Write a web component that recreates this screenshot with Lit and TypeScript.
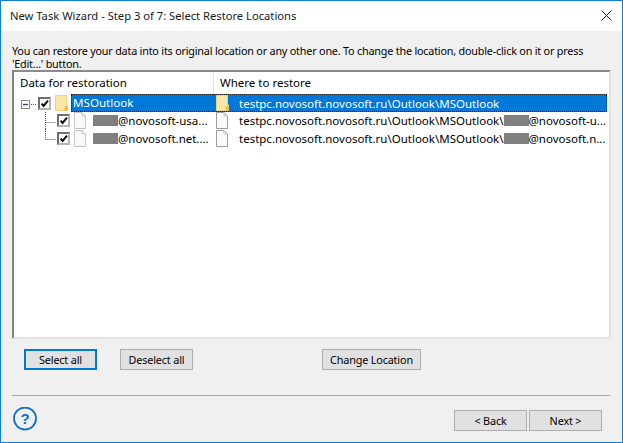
import { LitElement, html, css, svg } from "lit";
import { customElement } from "lit/decorators.js";

const check = svg`<path d="M1.6 4.6 L3.6 7 L8 1.6" fill="none" stroke="#0c0c0c" stroke-width="2"/>`;

@customElement("app-root")
export class AppRoot extends LitElement {
  static styles = css`
    :host { display: block; width: 623px; height: 443px; overflow: hidden; }
    * { box-sizing: border-box; }
    .win {
      width: 623px; height: 443px; display: flex; flex-direction: column;
      border: 1px solid #0f7fd8; background: #f0f0f0;
      font-family: "Noto Sans", "Open Sans", sans-serif; font-size: 11.5px; color: #000;
    }
    .title {
      height: 30px; background: #fff; display: flex; align-items: center;
      justify-content: space-between; padding: 0 10px 2px 9px; font-size: 11.2px; color: #1a1a1a; flex: none;
    }
    .close { display: block; }
    .intro { margin: 13px 0 0 11px; width: 600px; line-height: 13px; height: 26px; font-size: 10.8px; letter-spacing: -0.2px; flex: none; white-space: nowrap; }
    .panel {
      margin: 0 0 0 11px; width: 599px; height: 269px; flex: none; background: #fff;
      border: 2px solid #a0a0a0; border-right: 2px solid #e3e3e3; border-bottom: 2px solid #e3e3e3;
      border-left-color: #828282; border-top-color: #8a8a8a; display: flex; flex-direction: column;
    }
    .head { display: flex; height: 21px; flex: none; line-height: 21px; margin-bottom: 1px; }
    .h1 { width: 200px; padding-left: 6px; border-right: 1px solid #e5e5e5; }
    .h2 { padding-left: 6px; }
    .row { display: flex; align-items: center; height: 17.5px; white-space: nowrap; }
    .row.first { height: 18px; margin-right: 2px; }
    .left { width: 199px; display: flex; align-items: center; flex: none; height: 100%; padding-left: 5px; }
    .right { flex: 1; display: flex; align-items: center; height: 100%; min-width: 0; padding-left: 2px; margin-right: 2px; }
    .first .right { margin-right: 0; padding-left: 3px; background: #0078d7; color: #fff; border: 1px dotted #222; border-left: none; }
    .sel-left {
      flex: 1; height: 18px; line-height: 16px; padding-left: 1px; margin-left: 3px; font-size: 11.6px;
      background: #0078d7; color: #fff; border: 1px dotted #222; border-right: none;
    }
    .tx { display: flex; align-items: center; margin-left: 11px; }
    .first .tx { margin-left: 10px; }
    .name { margin-left: 7px; display: flex; align-items: center; }
    .red { display: inline-block; width: 25px; height: 11px; background: #808080; }
    svg { flex: none; display: block; }
    .cb {
      width: 13px; height: 13px; border: 2px solid; border-color: #6f6f6f #b5b5b5 #b5b5b5 #6f6f6f;
      background: #fff; flex: none;
    }
    .foot-btns { height: 56px; flex: none; padding: 10px 0 0 23px; display: flex; align-items: flex-start; }
    button {
      font: inherit; color: #000; background: #e1e1e1; border: 1px solid #adadad; height: 21px; padding: 0;
      display: block; line-height: 17px; font-size: 10.8px; letter-spacing: -0.15px;
    }
    .b73 { width: 73px; }
    .sel-b { border: 2px solid #0078d7; }
    .m23 { margin-left: 23px; }
    .m129 { margin-left: 129px; width: 99px; }
    .rule { margin-left: 11px; width: 598px; height: 1px; background: #a6a6a6; flex: none; }
    .bottom { flex: 1; display: flex; align-items: flex-start; padding: 11px 20px 0 12px; }
    .grow { flex: 1; }
    .m2 { margin-left: 2px; }
    .navs { display: flex; padding-top: 3px; }
  `;

  private box() {
    return html`<span class="cb"><svg width="9" height="9" viewBox="0 0 9 9">${check}</svg></span>`;
  }
  private folder(ml: number) {
    return html`<svg style="margin-left:${ml}px" width="13" height="16" viewBox="0 0 13 16">
      <path d="M.5 .5 H11.5 V10 H12.5 V15.5 H.5 Z" fill="#fde7a6" stroke="#f3d27a"/>
      <path d="M9.5 11 H13 V16 H9.5 Z" fill="#efc14a"/>
    </svg>`;
  }
  private file(ml: number, stroke: string) {
    return html`<svg style="margin-left:${ml}px" width="12" height="17" viewBox="0 0 12 17">
      <path d="M.5 .5 H8 L11.5 4 V16.5 H.5 Z" fill="#fafafa" stroke="${stroke}"/>
      <path d="M8 .5 V4 H11.5" fill="none" stroke="#c4c4c4"/>
    </svg>`;
  }
  private connector(last: boolean) {
    return html`<svg width="12" height="18" viewBox="0 0 12 18" style="margin-left:26px;overflow:visible">
      <path d="M.5 0 V${last ? 10.5 : 18.5} M.5 10.5 H11" fill="none" stroke="#555" stroke-dasharray="1 1"/>
    </svg>`;
  }

  render() {
    return html`<div class="win">
      <div class="title">
        <span>New Task Wizard - Step 3 of 7: Select Restore Locations</span>
        <svg class="close" width="11" height="11" viewBox="0 0 11 11"><path d="M.5 .5 L10.5 10.5 M10.5 .5 L.5 10.5" stroke="#222" stroke-width="1" fill="none"/></svg>
      </div>
      <div class="intro">You can restore your data into its original location or any other one. To change the location, double-click on it or press<br>'Edit...' button.</div>
      <div class="panel">
        <div class="head"><div class="h1">Data for restoration</div><div class="h2">Where to restore</div></div>
        <div class="row first">
          <div class="left">
            <svg width="19" height="18" viewBox="0 0 19 18">
              <rect x="2.5" y="6.5" width="8" height="8" fill="#fff" stroke="#8a8a8a"/>
              <path d="M4 10.5 H9" stroke="#2b3f9e" stroke-width="1.4"/>
              <path d="M12 10.5 H18" stroke="#555" stroke-dasharray="1 1"/>
            </svg>
            ${this.box()}
            ${this.folder(4)}
            <div class="sel-left">MSOutlook</div>
          </div>
          <div class="right">
            ${this.folder(0)}
            <span class="tx">testpc.novosoft.novosoft.ru\\Outlook\\MSOutlook</span>
          </div>
        </div>
        <div class="row">
          <div class="left">${this.connector(false)}${this.box()}${this.file(4, "#c4c4c4")}
            <span class="name"><span class="red"></span>@novosoft-usa...</span></div>
          <div class="right">${this.file(1, "#9c9c9c")}
            <span class="tx">testpc.novosoft.novosoft.ru\\Outlook\\MSOutlook\\<span class="red"></span>@novosoft-u...</span></div>
        </div>
        <div class="row">
          <div class="left">${this.connector(true)}${this.box()}${this.file(4, "#c4c4c4")}
            <span class="name"><span class="red"></span>@novosoft.net....</span></div>
          <div class="right">${this.file(1, "#9c9c9c")}
            <span class="tx">testpc.novosoft.novosoft.ru\\Outlook\\MSOutlook\\<span class="red"></span>@novosoft.n...</span></div>
        </div>
      </div>
      <div class="foot-btns">
        <button class="b73 sel-b">Select all</button>
        <button class="b73 m23">Deselect all</button>
        <button class="m129">Change Location</button>
      </div>
      <div class="rule"></div>
      <div class="bottom">
        <svg width="25" height="25" viewBox="0 0 25 25">
          <circle cx="12" cy="11.5" r="11" fill="none" stroke="#0f72c8" stroke-width="1.8"/>
          <text x="12" y="17" text-anchor="middle" font-family="Liberation Sans, sans-serif" font-weight="700" font-size="15" fill="#0f72c8">?</text>
        </svg>
        <div class="grow"></div>
        <div class="navs">
          <button class="b73">&lt; Back</button>
          <button class="b73 m2">Next &gt;</button>
        </div>
      </div>
    </div>`;
  }
}
